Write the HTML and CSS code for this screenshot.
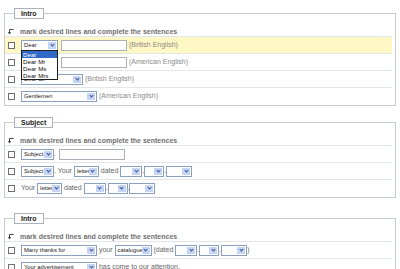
FILE: index.html
```html
<!DOCTYPE html>
<html lang="en">
<head>
    <meta charset="UTF-8">
    <meta name="viewport" content="width=device-width, initial-scale=1.0">
    <title>Letter Builder</title>
    <link rel="stylesheet" href="styles.css">
</head>
<body>

<div class="page">

    <!-- salutation -->
    <fieldset class="block first">
        <legend>Intro</legend>
        <div class="hint"><svg class="turn" width="7" height="7" viewBox="0 0 7 7"><path d="M6.5 1.5H2.5V4.5" fill="none" stroke="#444" stroke-width="1"/><path d="M0.8 4H4.2L2.5 6.5Z" fill="#444"/></svg>mark desired lines and complete the sentences</div>

        <div class="row active">
            <input type="checkbox" class="check">
            <span class="line">
                <span class="sel w-dear open">
                    <span class="val">Dear</span><span class="btn"></span>
                    <span class="menu">
                        <span class="opt on">Dear</span>
                        <span class="opt">Dear Mr</span>
                        <span class="opt">Dear Ms</span>
                        <span class="opt">Dear Mrs</span>
                    </span>
                </span>
                <input type="text" class="field">
                <span class="note">(British English)</span>
            </span>
        </div>
        <div class="row">
            <input type="checkbox" class="check">
            <span class="line">
                <span class="sel w-dear"><span class="val">Dear</span><span class="btn"></span></span>
                <input type="text" class="field">
                <span class="note">(American English)</span>
            </span>
        </div>
        <div class="row">
            <input type="checkbox" class="check">
            <span class="line">
                <span class="sel w-sir"><span class="val">Dear Sir</span><span class="btn"></span></span>
                <span class="note">(British English)</span>
            </span>
        </div>
        <div class="row">
            <input type="checkbox" class="check">
            <span class="line">
                <span class="sel w-long"><span class="val">Gentlemen</span><span class="btn"></span></span>
                <span class="note">(American English)</span>
            </span>
        </div>
    </fieldset>

    <!-- subject line -->
    <fieldset class="block second">
        <legend>Subject</legend>
        <div class="hint"><svg class="turn" width="7" height="7" viewBox="0 0 7 7"><path d="M6.5 1.5H2.5V4.5" fill="none" stroke="#444" stroke-width="1"/><path d="M0.8 4H4.2L2.5 6.5Z" fill="#444"/></svg>mark desired lines and complete the sentences</div>

        <div class="row">
            <input type="checkbox" class="check">
            <span class="line">
                <span class="sel w-subj"><span class="val">Subject</span><span class="btn"></span></span>.
                <input type="text" class="field">
            </span>
        </div>
        <div class="row">
            <input type="checkbox" class="check">
            <span class="line">
                <span class="sel w-subj"><span class="val">Subject</span><span class="btn"></span></span>.
                <span class="txt">Your</span>
                <span class="sel w-letter"><span class="val">letter</span><span class="btn"></span></span>
                <span class="txt">dated</span>
                <span class="sel w-d1"><span class="val"></span><span class="btn"></span></span>.<span class="sel w-d2"><span class="val"></span><span class="btn"></span></span>.<span class="sel w-d3"><span class="val"></span><span class="btn"></span></span>
            </span>
        </div>
        <div class="row">
            <input type="checkbox" class="check">
            <span class="line">
                <span class="txt">Your</span>
                <span class="sel w-letter"><span class="val">letter</span><span class="btn"></span></span>
                <span class="txt">dated</span>
                <span class="sel w-d1"><span class="val"></span><span class="btn"></span></span>.<span class="sel w-d2"><span class="val"></span><span class="btn"></span></span>.<span class="sel w-d3"><span class="val"></span><span class="btn"></span></span>
            </span>
        </div>
    </fieldset>

    <!-- opening sentence -->
    <fieldset class="block">
        <legend>Intro</legend>
        <div class="hint"><svg class="turn" width="7" height="7" viewBox="0 0 7 7"><path d="M6.5 1.5H2.5V4.5" fill="none" stroke="#444" stroke-width="1"/><path d="M0.8 4H4.2L2.5 6.5Z" fill="#444"/></svg>mark desired lines and complete the sentences</div>

        <div class="row">
            <input type="checkbox" class="check">
            <span class="line">
                <span class="sel w-long"><span class="val">Many thanks for</span><span class="btn"></span></span>
                <span class="txt">your</span>
                <span class="sel w-cat"><span class="val">catalogue</span><span class="btn"></span></span>
                <span class="txt">(dated</span>
                <span class="sel w-d1"><span class="val"></span><span class="btn"></span></span>.<span class="sel w-d2"><span class="val"></span><span class="btn"></span></span>.<span class="sel w-d3"><span class="val"></span><span class="btn"></span></span><span class="txt">)</span>
            </span>
        </div>
        <div class="row">
            <input type="checkbox" class="check">
            <span class="line">
                <span class="sel w-long"><span class="val">Your advertisement</span><span class="btn"></span></span>
                <span class="txt">has come to our attention.</span>
            </span>
        </div>
    </fieldset>

</div>

</body>
</html>
```

FILE: styles.css
```css
body {
    margin: 0;
    font-family: "Liberation Sans", Arial, sans-serif;
    font-size: 7px;
    color: #333;
    background: #fff;
}

.page {
    padding: 8px 4px 0 4px;
}

.block {
    margin: 0 0 15px 0;
    padding: 0 3px 1px 0;
    border: 1px solid #c6ccd6;
    min-width: 0;
}

.block.first {
    margin-bottom: 11px;
}

.block legend {
    margin-left: 9px;
    padding: 0 6px;
    height: 11px;
    line-height: 9px;
    box-sizing: border-box;
    border: 1px solid #aab2be;
    font-weight: bold;
    color: #222;
    background: #fff;
}

.hint {
    display: flex;
    align-items: center;
    height: 10px;
    margin-top: 7px;
    padding-left: 2px;
    font-weight: bold;
    color: #707070;
}

.turn {
    display: block;
    flex-shrink: 0;
    margin: 1px 6px 0 0;
}

.row {
    display: flex;
    align-items: center;
    height: 17px;
    box-sizing: border-box;
    border-top: 1px solid #e3e6ea;
    padding-left: 3px;
}

.row.active {
    background: #fff7c4;
}

.check {
    appearance: none;
    -webkit-appearance: none;
    width: 7px;
    height: 7px;
    margin: 0 6px 0 0;
    box-sizing: border-box;
    border: 1px solid #6f6f6f;
    background: #fff;
}

.line {
    white-space: nowrap;
    line-height: 11px;
    color: #555;
}

.sel {
    position: relative;
    display: inline-flex;
    vertical-align: middle;
    height: 11px;
    box-sizing: border-box;
    border: 1px solid #8aa0bf;
    background: #fff;
    color: #222;
}

.sel .val {
    flex: 1;
    padding-left: 2px;
    line-height: 9px;
    font-size: 5.8px;
    overflow: hidden;
}

.sel .btn {
    display: flex;
    align-items: center;
    justify-content: center;
    width: 8px;
    margin: 1px 1px 1px 0;
    background: #c6d5f5;
}

.sel .btn::after {
    content: "";
    width: 2px;
    height: 2px;
    margin-top: -2px;
    border-right: 1px solid #34508a;
    border-bottom: 1px solid #34508a;
    transform: rotate(45deg);
}

.w-dear { width: 37px; }
.w-sir { width: 62px; }
.w-long { width: 76px; }
.w-subj { width: 33px; }
.w-letter { width: 25px; }
.w-cat { width: 37px; }
.w-d1 { width: 22px; }
.w-d2 { width: 20px; }
.w-d3 { width: 26px; }

.menu {
    position: absolute;
    top: 9px;
    left: -1px;
    z-index: 2;
    width: 37px;
    box-sizing: border-box;
    border: 1px solid #1e1e1e;
    background: #fff;
}

.opt {
    display: block;
    height: 7px;
    line-height: 7px;
    padding-left: 1px;
    font-size: 6.2px;
    color: #111;
}

.opt.on {
    background: #3169c6;
    color: #fff;
}

.field {
    width: 66px;
    height: 11px;
    margin: 0 0 0 1px;
    padding: 0;
    box-sizing: border-box;
    vertical-align: middle;
    border: 1px solid #aab1bb;
    background: #fff;
}

.note {
    color: #8a8a8a;
}

.txt {
    color: #666;
}
```
